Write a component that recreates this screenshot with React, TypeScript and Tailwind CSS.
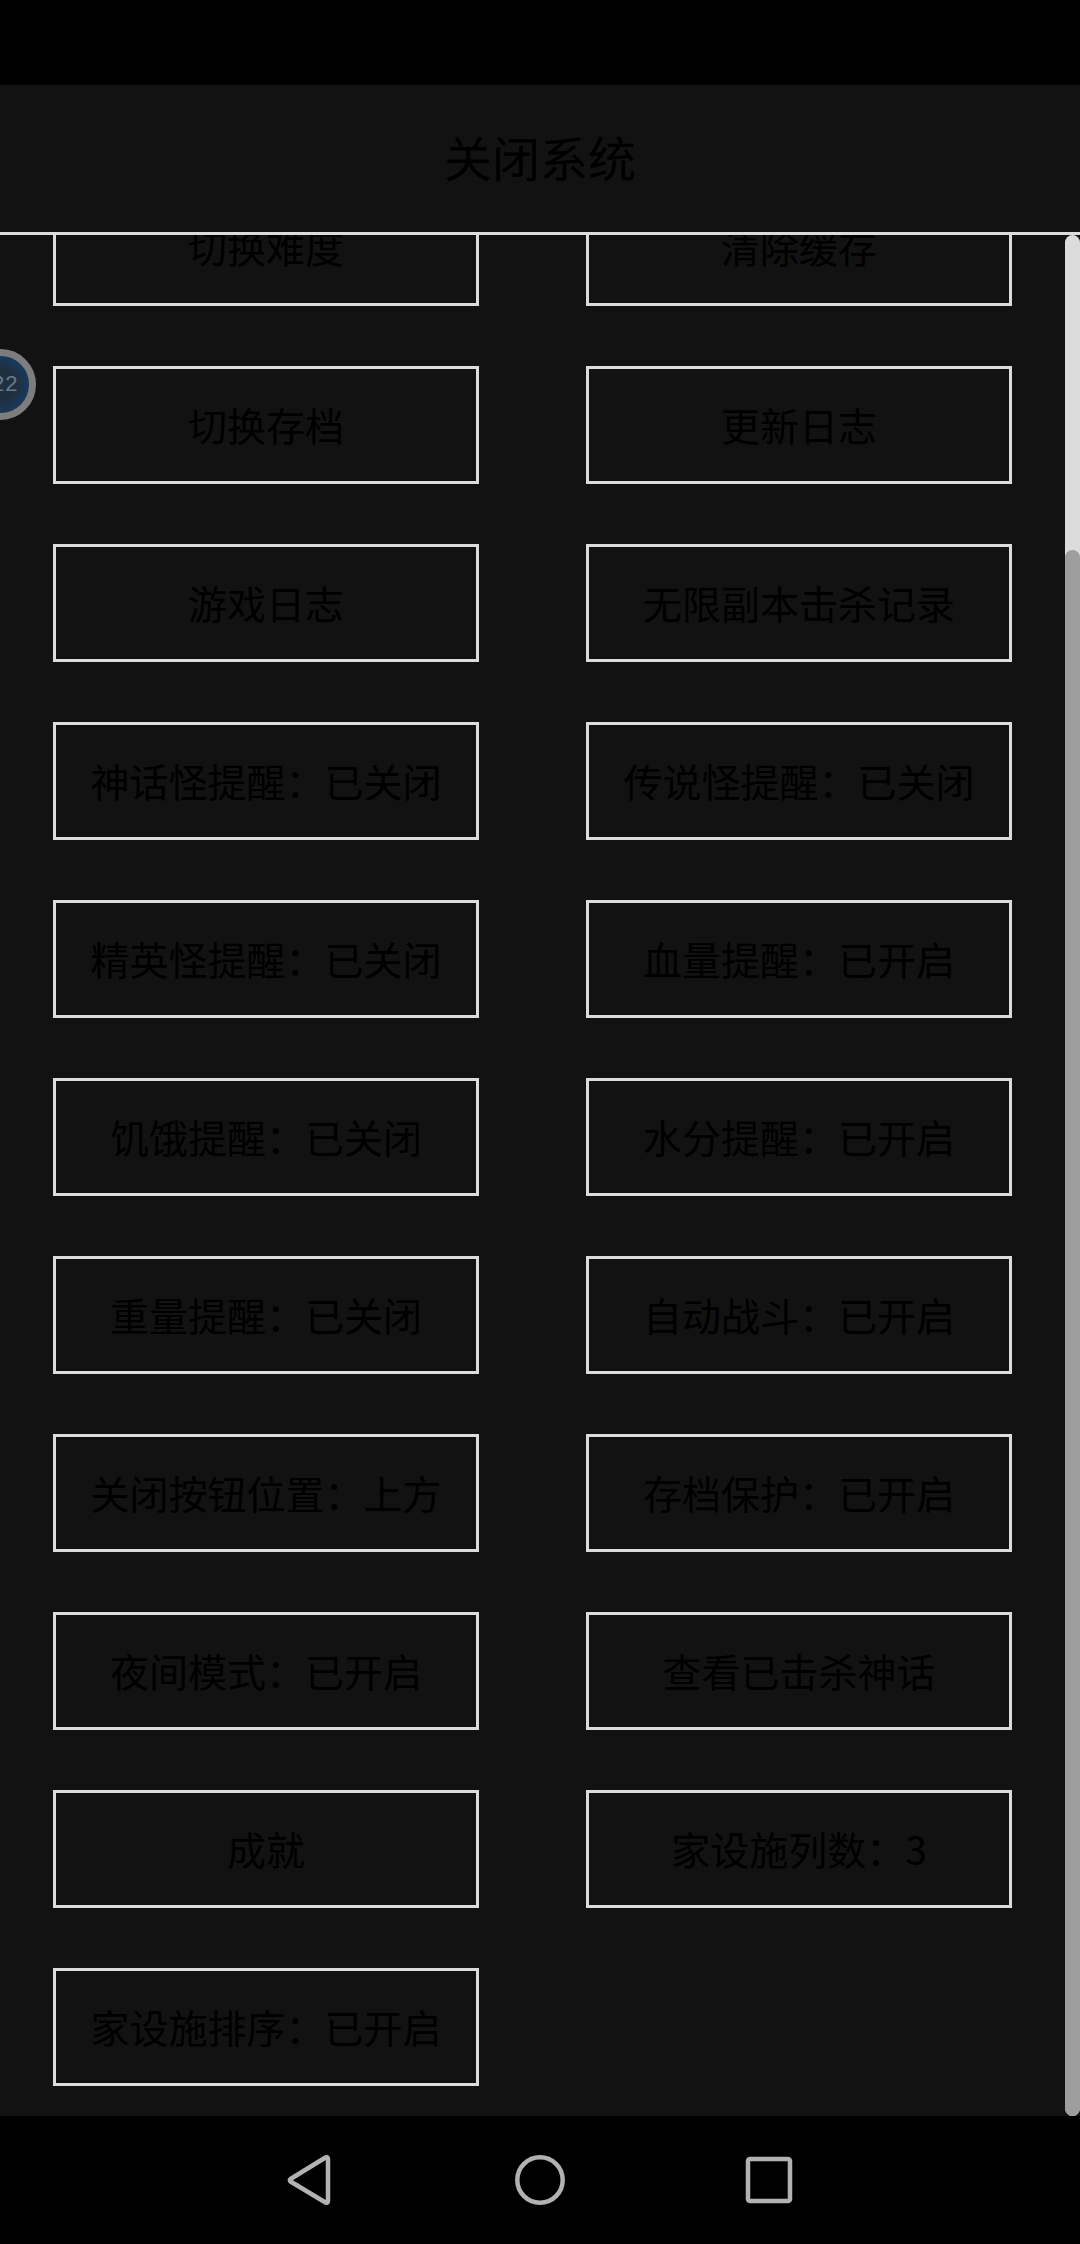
const App = () => {

  const options = [
    '切换难度', '清除缓存',
    '切换存档', '更新日志',
    '游戏日志', '无限副本击杀记录',
    '神话怪提醒：已关闭', '传说怪提醒：已关闭',
    '精英怪提醒：已关闭', '血量提醒：已开启',
    '饥饿提醒：已关闭', '水分提醒：已开启',
    '重量提醒：已关闭', '自动战斗：已开启',
    '关闭按钮位置：上方', '存档保护：已开启',
    '夜间模式：已开启', '查看已击杀神话',
    '成就', '家设施列数：3',
    '家设施排序：已开启',
  ]

  return (
    <div className="flex h-screen flex-col overflow-hidden bg-black font-['Noto_Sans_CJK_SC',sans-serif] text-black">
      <div className="h-[85px] shrink-0"></div>

      <header className="flex h-[150px] shrink-0 border-b-3 border-[#dcdcdc] bg-[#121212]">
        <button className="w-full pb-1.5 text-[48px] leading-none">关闭系统</button>
      </header>

      <main className="flex min-h-0 flex-1 bg-[#121212]">
        {/* the list is scrolled down to its last row */}
        <div className="flex min-w-0 flex-1 flex-col justify-end overflow-hidden">
          <div className="grid grid-cols-2 gap-x-[107px] gap-y-[60px] px-[53px] pb-[30px]">
            {
              options.map( opt => (
                <button key={opt} className="h-[118px] border-3 border-[#dcdcdc] pb-0.5 text-[39px] leading-none whitespace-nowrap">{opt}</button>
              ) )
            }
          </div>
        </div>

        <div className="flex w-[15px] shrink-0 flex-col rounded-full bg-[#dcdcdc] pt-[315px]">
          <div className="flex-1 rounded-full bg-[#9e9e9e]"></div>
        </div>
      </main>

      <nav className="flex h-32 shrink-0 items-center justify-center gap-[180px]">
        <button aria-label="返回">
          <svg width="50" height="50" viewBox="0 0 50 50" fill="none" stroke="#b2b2b2" strokeWidth="4.5" strokeLinejoin="round">
            <path d="M5.500 24a1.500 1.500 0 0 0 0 2.500L40.500 47.500Q43 48.500 43 46V4Q43 1.500 40.500 2.500Z" />
          </svg>
        </button>
        <button aria-label="主页">
          <svg width="50" height="50" viewBox="0 0 50 50" fill="none" stroke="#b2b2b2" strokeWidth="4.5">
            <circle cx="25" cy="25" r="22.7" />
          </svg>
        </button>
        <button aria-label="最近任务">
          <svg width="50" height="50" viewBox="0 0 50 50" fill="none" stroke="#b2b2b2" strokeWidth="4.5">
            <rect x="3" y="4" width="42" height="42" rx="2" />
          </svg>
        </button>
      </nav>

      {/* floating badge, half off screen */}
      <div className="absolute top-[349px] -left-[35px] flex size-[71px] items-center justify-end rounded-full border-7 border-[#7d7d7d] bg-radial from-[#1f2f40] from-40% to-[#173a5e] to-70% pt-0.5 pr-[11px] font-['Liberation_Mono',monospace] text-[22px] leading-none text-[#6b7887]">
        22
      </div>
    </div>
  )
}

export default App
